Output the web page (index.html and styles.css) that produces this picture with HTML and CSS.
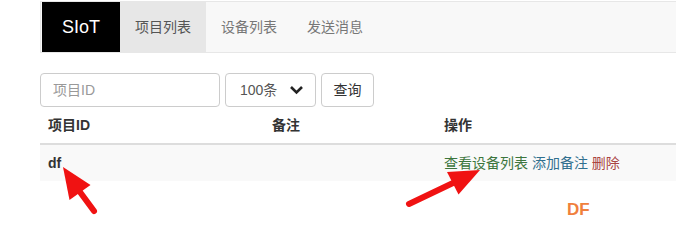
FILE: index.html
```html
<!DOCTYPE html>
<html lang="zh">

<head>
  <meta charset="UTF-8">
  <meta name="viewport" content="width=device-width, initial-scale=1.0">
  <title>SIoT</title>
  <link rel="stylesheet" href="styles.css">
</head>

<body>
  <div class="page">
    <div class="navbar">
      <a class="brand" href="#">SIoT</a>
      <a class="nav-item active" href="#">项目列表</a>
      <a class="nav-item" href="#">设备列表</a>
      <a class="nav-item" href="#">发送消息</a>
    </div>

    <div class="search">
      <input class="ipt" type="text" placeholder="项目ID">
      <div class="select">
        <span>100条</span>
        <svg width="15" height="10" viewBox="0 0 15 10">
          <path d="M2 2 L7.5 7.5 L13 2" fill="none" stroke="#222" stroke-width="2.6"/>
        </svg>
      </div>
      <button class="btn">查询</button>
    </div>

    <table class="list">
      <thead>
        <tr>
          <th class="c1">项目ID</th>
          <th class="c2">备注</th>
          <th>操作</th>
        </tr>
      </thead>
      <tbody>
        <tr>
          <td class="pid">df</td>
          <td></td>
          <td>
            <a class="op green" href="#">查看设备列表</a>
            <a class="op blue" href="#">添加备注</a>
            <a class="op red" href="#">删除</a>
          </td>
        </tr>
      </tbody>
    </table>
  </div>

  <!-- 标注箭头 -->
  <svg class="marks" width="676" height="240" viewBox="0 0 676 240">
    <line x1="80" y1="192" x2="94" y2="211" stroke="#f01212" stroke-width="6" stroke-linecap="round"/>
    <polygon points="63,167 90.5,185 69.5,200" fill="#f01212"/>
    <line x1="453" y1="183" x2="409" y2="204" stroke="#f01212" stroke-width="6" stroke-linecap="round"/>
    <polygon points="480,170 458.5,194.5 447,172" fill="#f01212"/>
  </svg>
  <div class="mark-df">DF</div>
</body>

</html>
```

FILE: styles.css
```css
* {
  margin: 0;
  padding: 0;
  box-sizing: border-box;
}

html,
body {
  overflow: hidden;
}

body {
  font-family: "Liberation Sans", "Noto Sans CJK SC", sans-serif;
  font-size: 14px;
  line-height: 20px;
  color: #333;
  background: #fff;
}

.page {
  padding: 1px 0 0 40px;
}

.navbar {
  display: flex;
  height: 52px;
  background-color: #f8f8f8;
  border: 1px solid #e7e7e7;
  border-right: none;
  margin-bottom: 20px;
}

.navbar a {
  text-decoration: none;
}

.brand {
  width: 78px;
  margin-left: 1px;
  background-color: #000;
  color: #fff;
  font-size: 18px;
  line-height: 50px;
  text-align: center;
}

.nav-item {
  padding: 0 15px;
  line-height: 50px;
  color: #777;
}

.nav-item.active {
  background-color: #e7e7e7;
  color: #555;
}

.search {
  display: flex;
  gap: 5px;
  height: 34px;
}

.ipt {
  width: 180px;
  height: 34px;
  padding: 6px 12px;
  border: 1px solid #ccc;
  border-radius: 4px;
  font: inherit;
  color: #555;
  outline: none;
}

.ipt::placeholder {
  color: #999;
}

.select {
  width: 91px;
  display: flex;
  align-items: center;
  padding-left: 14px;
  gap: 12px;
  border: 1px solid #ccc;
  border-radius: 4px;
  color: #555;
}

.btn {
  width: 53px;
  border: 1px solid #ccc;
  border-radius: 4px;
  background: #fff;
  font: inherit;
  color: #333;
}

.list {
  width: 100%;
  border-collapse: collapse;
}

.list th,
.list td {
  padding: 8px;
  text-align: left;
}

.list th {
  font-weight: bold;
  border-bottom: 2px solid #ddd;
}

.list .c1 {
  width: 224px;
}

.list .c2 {
  width: 172px;
}

.list tbody tr {
  background-color: #f9f9f9;
}

.list .pid {
  font-weight: bold;
}

.op {
  text-decoration: none;
}

.op.green {
  color: #3c763d;
}

.op.blue {
  color: #31708f;
}

.op.red {
  color: #a94442;
}

.marks {
  position: absolute;
  left: 0;
  top: 0;
  pointer-events: none;
}

.mark-df {
  position: absolute;
  left: 567px;
  top: 200px;
  font-size: 17px;
  line-height: 20px;
  font-weight: bold;
  color: #f0803c;
}
```
